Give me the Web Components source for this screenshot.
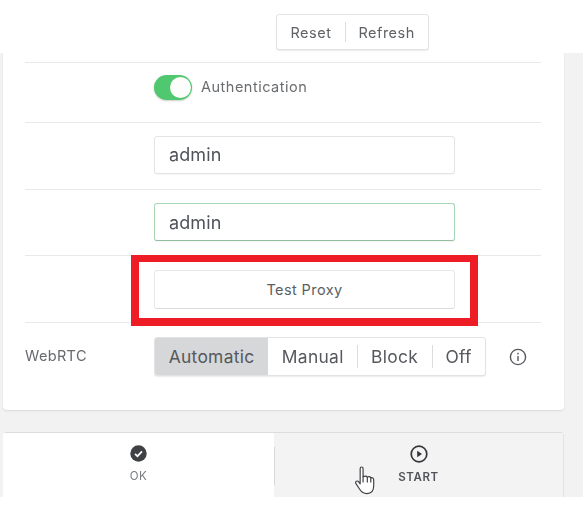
<!DOCTYPE html>
<html>
<head>
<meta charset="utf-8">
<title>Proxy settings</title>
<style>
  html, body { margin: 0; height: 100%; background: #fff; }
  body { font-family: Inter, "Noto Sans", sans-serif; color: #55585c; overflow: hidden; }
</style>
</head>
<body>
<settings-page>
  <button-group slot="top">
    <seg-item plain>Reset</seg-item>
    <seg-item plain divided>Refresh</seg-item>
  </button-group>

  <form-row pb="10">
    <toggle-switch>Authentication</toggle-switch>
  </form-row>
  <form-row h="67" pb="3"><text-box>admin</text-box></form-row>
  <form-row h="66" pb="1"><text-box focused>admin</text-box></form-row>
  <form-row h="67" highlighted><wide-button>Test Proxy</wide-button></form-row>
  <form-row h="88" pb="20" label="WebRTC" info>
    <button-group tall>
      <seg-item selected>Automatic</seg-item>
      <seg-item>Manual</seg-item>
      <seg-item divided>Block</seg-item>
      <seg-item divided>Off</seg-item>
    </button-group>
  </form-row>

  <action-bar slot="actions"></action-bar>
</settings-page>

<script>
class SettingsPage extends HTMLElement {
    constructor() {
        super();
        this.attachShadow({ mode: 'open' });
        this.shadowRoot.innerHTML = `
            <style>
                :host { display: block; width: 583px; height: 512px; filter: blur(.4px); }
                .top { height: 53px; box-sizing: border-box; padding: 14px 0 0 276px; }
                .main { height: 444px; background: #f2f2f2; padding: 0 19px 0 3px; box-sizing: border-box;
                        display: flex; flex-direction: column; gap: 22px; }
                .card { height: 358px; box-sizing: border-box; background: #fff; padding: 9px 23px 0 22px;
                        border-radius: 0 0 4px 4px; box-shadow: 0 1px 2px rgba(0,0,0,.1); }
            </style>
            <div class="top"><slot name="top"></slot></div>
            <div class="main">
                <div class="card"><slot></slot></div>
                <slot name="actions"></slot>
            </div>
        `;
    }
}

class FormRow extends HTMLElement {
    constructor() {
        super();
        this.attachShadow({ mode: 'open' });
        this.shadowRoot.innerHTML = `
            <style>
                :host { display: grid; grid-template-columns: 129px auto 1fr; align-items: center;
                        box-sizing: border-box; border-top: 1px solid #e9e9ea; position: relative; }
                :host([highlighted]) { z-index: 1; }
                .label { font-size: 14.500px; letter-spacing: .35px; color: #66696d; margin-top: -2px; }
                .info { justify-self: start; margin-left: 23px; display: none; }
                .mark { display: none; position: absolute; left: 106px; top: -1px; width: 347px; height: 71px;
                        box-sizing: border-box; border: 8px solid #ee1c25; border-top-width: 7px; }
            </style>
            <div class="label"></div>
            <div><slot></slot></div>
            <svg class="info" width="18" height="18" viewBox="0 0 18 18" fill="none" stroke="#55585c" stroke-width="1.4">
                <circle cx="9" cy="9" r="7.600"/><path d="M9 8v5M9 4.800v1.600"/>
            </svg>
            <div class="mark"></div>
        `;
    }

    connectedCallback() {
        this.style.height = (this.getAttribute('h') || 60) + 'px';
        this.style.paddingBottom = (this.getAttribute('pb') || 0) + 'px';
        this.shadowRoot.querySelector('.label').textContent = this.getAttribute('label') || '';
        if (this.hasAttribute('info')) this.shadowRoot.querySelector('.info').style.display = 'block';
        if (this.hasAttribute('highlighted')) this.shadowRoot.querySelector('.mark').style.display = 'block';
    }
}

class ToggleSwitch extends HTMLElement {
    constructor() {
        super();
        this.attachShadow({ mode: 'open' });
        this.shadowRoot.innerHTML = `
            <style>
                :host { display: flex; align-items: center; gap: 9px; font-size: 14.500px; letter-spacing: .5px; color: #6a6d70; }
                .track { width: 38px; height: 25px; border-radius: 13px; background: #4fc86f; position: relative;
                         box-shadow: 0 1px 2px rgba(0,0,0,.2); }
                .knob { position: absolute; right: 1px; top: 2px; width: 21px; height: 21px; border-radius: 50%; background: #fdfdfb; }
                span { margin-top: -2px; }
            </style>
            <div class="track"><div class="knob"></div></div>
            <span><slot></slot></span>
        `;
    }
}

class TextBox extends HTMLElement {
    constructor() {
        super();
        this.attachShadow({ mode: 'open' });
        this.shadowRoot.innerHTML = `
            <style>
                :host { display: flex; align-items: center; width: 301px; height: 38px; box-sizing: border-box;
                        padding-left: 14px; border: 1px solid #e4e4e6; border-radius: 3px; background: #fff;
                        font-size: 18px; letter-spacing: .1px; color: #50535a; box-shadow: 0 1px 1px rgba(0,0,0,.04); }
                :host([focused]) { border-color: #a9d5b4; border-bottom-color: #93bd9f; }
            </style>
            <slot></slot>
        `;
    }
}

class WideButton extends HTMLElement {
    constructor() {
        super();
        this.attachShadow({ mode: 'open' });
        this.shadowRoot.innerHTML = `
            <style>
                :host { display: flex; align-items: center; justify-content: center; width: 301px; height: 39px;
                        box-sizing: border-box; border: 1px solid #e8e8e9; border-bottom-color: #dcdcde; border-radius: 3px;
                        font-size: 14.500px; letter-spacing: .4px; color: #5b5e62; background: #fff; }
            </style>
            <slot></slot>
        `;
    }
}

class ButtonGroup extends HTMLElement {
    constructor() {
        super();
        this.attachShadow({ mode: 'open' });
        this.shadowRoot.innerHTML = `
            <style>
                :host { display: inline-flex; height: 36px; box-sizing: border-box; background: #fff;
                        border: 1px solid #e3e3e5; border-radius: 3px; overflow: hidden;
                        box-shadow: 0 1px 1px rgba(0,0,0,.08); vertical-align: top; }
                :host([tall]) { height: 39px; }
            </style>
            <slot></slot>
        `;
    }
}

class SegItem extends HTMLElement {
    constructor() {
        super();
        this.attachShadow({ mode: 'open' });
        this.shadowRoot.innerHTML = `
            <style>
                :host { display: flex; align-items: center; position: relative; padding: 0 13.700px;
                        font-size: 17.400px; letter-spacing: .3px; color: #55585c; }
                :host([plain]) { font-size: 14.500px; letter-spacing: .5px; padding: 0 13.500px; color: #5e6165; }
                :host([selected]) { background: #d6d7d9; }
                .bar { display: none; position: absolute; left: 0; top: 7px; bottom: 7px; width: 1px; background: #dcdcde; }
                :host([divided]) .bar { display: block; }
            </style>
            <span class="bar"></span>
            <slot></slot>
        `;
    }
}

class ActionBar extends HTMLElement {
    constructor() {
        super();
        this.attachShadow({ mode: 'open' });
        this.shadowRoot.innerHTML = `
            <style>
                :host { display: grid; grid-template-columns: 271px 1fr; height: 64px; position: relative;
                        border-top: 1px solid #dcdcdc; border-right: 1px solid #e2e2e2; border-radius: 4px 4px 0 0;
                        font-size: 11.500px; letter-spacing: .6px; color: #7a7d80; }
                .action { display: flex; flex-direction: column; align-items: center; gap: 7px; padding-top: 12px; }
                .ok { background: #fff; }
                .start { background: #f3f3f3; color: #505357; font-weight: 600; }
                .rule { position: absolute; left: 271px; top: 14px; height: 38px; width: 1px; background: #d8d8d8; }
                .hand { position: absolute; left: 351px; top: 33px; }
            </style>
            <div class="action ok">
                <svg width="17" height="17" viewBox="0 0 17 17">
                    <circle cx="8.500" cy="8.500" r="8.200" fill="#3f4144"/>
                    <path d="M5 8.800l2.500 2.400L12 6.400" fill="none" stroke="#fff" stroke-width="1.700"/>
                </svg>
                <span>OK</span>
            </div>
            <div class="action start">
                <svg width="18" height="18" viewBox="0 0 18 18">
                    <circle cx="9" cy="9" r="7.800" fill="none" stroke="#33353a" stroke-width="1.700"/>
                    <path d="M7.200 5.800L12 9l-4.800 3.200z" fill="#33353a"/>
                </svg>
                <span>START</span>
            </div>
            <div class="rule"></div>
            <svg class="hand" width="22" height="29" viewBox="0 0 22 30" fill="#fff" stroke="#3c3e42" stroke-width="1.200" stroke-linejoin="round">
                <path d="M6 2.500c0-2 3-2 3 0V11c2-.8 3.600-.6 4.400.4 1.600-.6 3-.3 3.600.7 1.600-.3 3 .4 3 2.400v6c0 5-2 8-7 8-4 0-5.600-1.500-7.500-4.500L1.500 18c-1-2 1.500-3.500 3-1.500L6 18.500z"/>
                <path d="M9 11v6M13.400 11.400V17M17 12.100V17" fill="none"/>
            </svg>
        `;
    }
}

customElements.define('settings-page', SettingsPage);
customElements.define('form-row', FormRow);
customElements.define('toggle-switch', ToggleSwitch);
customElements.define('text-box', TextBox);
customElements.define('wide-button', WideButton);
customElements.define('button-group', ButtonGroup);
customElements.define('seg-item', SegItem);
customElements.define('action-bar', ActionBar);
</script>
</body>
</html>
